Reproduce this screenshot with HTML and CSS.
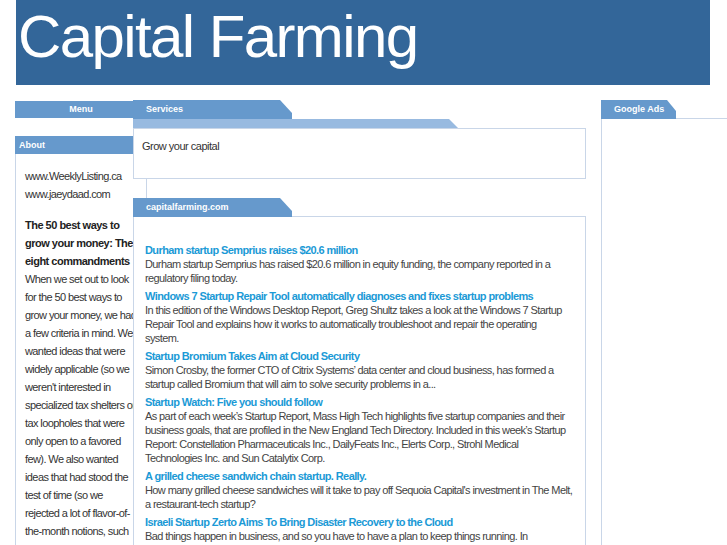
FILE: index.html
```html
<!DOCTYPE html>
<html>
	<head>
		<meta charset='utf-8'>
		<meta name='viewport' content='width=device-width, initial-scale=1'>
		<title>Capital Farming</title>
		<link rel="stylesheet" href="styles.css">
	</head>
	<body>
		<header>
			<h1>Capital Farming</h1>
		</header>
		<div class='columns'>
			<div class='left'>
				<div class='menu-bar'>Menu</div>
				<div class='side-title'>About</div>
				<div class='side-box'>
					<div>www.WeeklyListing.ca</div>
					<div>www.jaeydaad.com</div>
					<p>
						<b>The 50 best ways to grow your money: The eight commandments</b><br>
						When we set out to look for the 50 best ways to grow your money, we had a few criteria in mind. We wanted ideas that were widely applicable (so we weren't interested in specialized tax shelters or tax loopholes that were only open to a favored few). We also wanted ideas that had stood the test of time (so we rejected a lot of flavor-of-the-month notions, such as buying gold futures or trading currencies).
					</p>
				</div>
			</div>
			<main>
				<div class='tab'>Services</div>
				<div class='sub-bar'></div>
				<div class='box services'>Grow your capital</div>
				<div class='tab'>capitalfarming.com</div>
				<div class='box news'>
					<div class='item'>
						<a href='#'>Durham startup Semprius raises $20.6 million</a>
						<div>Durham startup Semprius has raised $20.6 million in equity funding, the company reported in a regulatory filing today.</div>
					</div>
					<div class='item'>
						<a href='#'>Windows 7 Startup Repair Tool automatically diagnoses and fixes startup problems</a>
						<div>In this edition of the Windows Desktop Report, Greg Shultz takes a look at the Windows 7 Startup Repair Tool and explains how it works to automatically troubleshoot and repair the operating system.</div>
					</div>
					<div class='item'>
						<a href='#'>Startup Bromium Takes Aim at Cloud Security</a>
						<div>Simon Crosby, the former CTO of Citrix Systems’ data center and cloud business, has formed a startup called Bromium that will aim to solve security problems in a...</div>
					</div>
					<div class='item'>
						<a href='#'>Startup Watch: Five you should follow</a>
						<div>As part of each week’s Startup Report, Mass High Tech highlights five startup companies and their business goals, that are profiled in the New England Tech Directory. Included in this week’s Startup Report: Constellation Pharmaceuticals Inc., DailyFeats Inc., Elerts Corp., Strohl Medical Technologies Inc. and Sun Catalytix Corp.</div>
					</div>
					<div class='item'>
						<a href='#'>A grilled cheese sandwich chain startup. Really.</a>
						<div>How many grilled cheese sandwiches will it take to pay off Sequoia Capital's investment in The Melt, a restaurant-tech startup?</div>
					</div>
					<div class='item'>
						<a href='#'>Israeli Startup Zerto Aims To Bring Disaster Recovery to the Cloud</a>
						<div>Bad things happen in business, and so you have to have a plan to keep things running. In enterprise IT, that plan is usually called disaster recovery.</div>
					</div>
				</div>
			</main>
			<aside>
				<div class='tab small'>Google Ads</div>
				<div class='ads-box'></div>
			</aside>
		</div>
	</body>
</html>
```

FILE: styles.css
```css
:root {
	--dark-blue: rgb(51, 102, 153);
	--blue: rgb(102, 153, 204);
	--light-blue: rgb(152, 186, 224);
	--line: rgb(201, 214, 232);
	--link: rgb(27, 154, 214);
	--text: rgb(68, 68, 68);
}
html {
	background-color: #fff;
	color: var(--text);
	font-family: "Liberation Sans", Arial, Helvetica, sans-serif;
	font-size: 11px;
	letter-spacing: -0.6px;
}
body {
	margin: 0;
	padding: 0;
	overflow: hidden;
}
header {
	width: 694px;
	height: 85px;
	margin: 0 0 15px 16px;
	background-color: var(--dark-blue);
}
h1 {
	margin: 0;
	padding: 7px 0 0 2px;
	font-size: 60px;
	line-height: 60px;
	font-weight: normal;
	letter-spacing: -1.6px;
	color: #fff;
}
.columns {
	display: flex;
	align-items: flex-start;
	padding-left: 15px;
}
.left {
	width: 132px;
	flex-shrink: 0;
	padding-top: 1px;
}
.menu-bar, .side-title, .tab {
	background-color: var(--blue);
	color: #fff;
	font-size: 9px;
	font-weight: bold;
	letter-spacing: 0;
}
.menu-bar {
	height: 17px;
	line-height: 17px;
	text-align: center;
	margin-bottom: 18px;
}
.side-title {
	height: 18px;
	line-height: 18px;
	padding-left: 4px;
}
.side-box {
	border-left: 1px solid var(--line);
	border-right: 1px solid var(--line);
	padding: 13px 8px 13px 9px;
	line-height: 18px;
	color: rgb(51, 51, 51);
	height: 600px;
}
.side-box p {
	margin: 13px 0 0 0;
}
.side-box b {
	color: rgb(34, 34, 34);
	letter-spacing: -0.5px;
}
main {
	width: 453px;
	flex-shrink: 0;
	margin-left: -14px;
}
.tab {
	width: 146px;
	height: 19px;
	line-height: 19px;
	padding-left: 13px;
	clip-path: polygon(0 0, calc(100% - 12px) 0, 100% 13px, 100% 100%, 0 100%);
}
.tab.small {
	width: 62px;
	clip-path: polygon(0 0, calc(100% - 9px) 0, 100% 11px, 100% 100%, 0 100%);
}
.sub-bar {
	width: 325px;
	height: 9px;
	background-color: var(--light-blue);
	clip-path: polygon(0 0, calc(100% - 9px) 0, 100% 100%, 0 100%);
}
.box {
	background-color: #fff;
	border: 1px solid var(--line);
}
.services {
	height: 29px;
	padding: 11px 8px 9px 8px;
	margin-bottom: 19px;
	color: rgb(51, 51, 51);
	letter-spacing: -0.5px;
}
.news {
	border-bottom: 0;
	padding: 26px 12.6px 40px 11px;
	line-height: 14px;
	margin-top: -1px;
}
.item {
	margin-bottom: 4px;
}
.item a {
	display: block;
	color: var(--link);
	font-weight: bold;
	text-decoration: none;
	letter-spacing: -0.6px;
}
aside {
	width: 126px;
	flex-shrink: 0;
	margin-left: 15px;
}
.ads-box {
	height: 500px;
	border-top: 1px solid var(--line);
	border-left: 1px solid var(--line);
	margin-top: -1px;
}
```
